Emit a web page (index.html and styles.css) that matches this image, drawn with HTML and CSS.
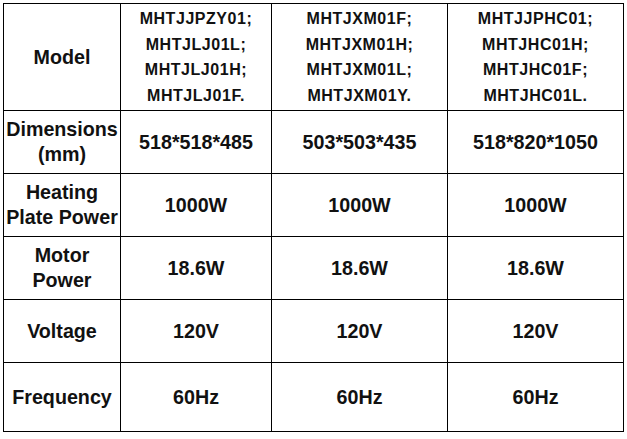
FILE: index.html
```html
<!DOCTYPE html>
<html>
<head>
<meta charset="utf-8">
<link rel="stylesheet" href="styles.css">
</head>
<body>
<div class="spec">
  <div class="cell label">Model</div>
  <div class="cell model">MHTJJPZY01;<br>MHTJLJ01L;<br>MHTJLJ01H;<br>MHTJLJ01F.</div>
  <div class="cell model">MHTJXM01F;<br>MHTJXM01H;<br>MHTJXM01L;<br>MHTJXM01Y.</div>
  <div class="cell model">MHTJJPHC01;<br>MHTJHC01H;<br>MHTJHC01F;<br>MHTJHC01L.</div>

  <div class="cell label">Dimensions<br>(mm)</div>
  <div class="cell">518*518*485</div>
  <div class="cell">503*503*435</div>
  <div class="cell">518*820*1050</div>

  <div class="cell label">Heating<br>Plate Power</div>
  <div class="cell">1000W</div>
  <div class="cell">1000W</div>
  <div class="cell">1000W</div>

  <div class="cell label">Motor<br>Power</div>
  <div class="cell">18.6W</div>
  <div class="cell">18.6W</div>
  <div class="cell">18.6W</div>

  <div class="cell label">Voltage</div>
  <div class="cell">120V</div>
  <div class="cell">120V</div>
  <div class="cell">120V</div>

  <div class="cell label">Frequency</div>
  <div class="cell">60Hz</div>
  <div class="cell">60Hz</div>
  <div class="cell">60Hz</div>
</div>
</body>
</html>
```
FILE: styles.css
```css
html, body {
  margin: 0;
  padding: 0;
  background: #ffffff;
}
body {
  padding: 3px 0 0 3px;
  font-family: "Liberation Sans", Arial, sans-serif;
  font-weight: bold;
  color: #111111;
}
.spec {
  display: grid;
  grid-template-columns: 117px 151px 176px 176px;
  grid-template-rows: 107px 63px 63px 63px 63px 69px;
  width: max-content;
  border-left: 1px solid #000;
  border-top: 1px solid #000;
}
.cell {
  box-sizing: border-box;
  border-right: 1px solid #000;
  border-bottom: 1px solid #000;
  display: flex;
  align-items: center;
  justify-content: center;
  text-align: center;
  font-size: 19.7px;
  line-height: 25px;
}
.model {
  font-size: 16px;
  letter-spacing: 0.55px;
  line-height: 25.5px;
}
```
